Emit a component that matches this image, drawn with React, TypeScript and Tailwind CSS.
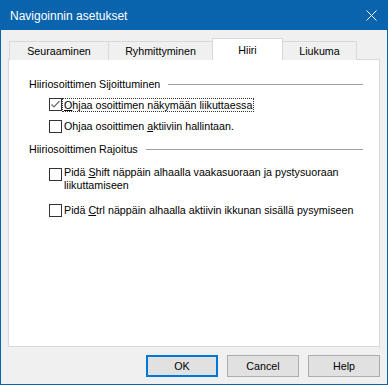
import React from 'react'

const font = { fontFamily: '"Liberation Sans", Arial, sans-serif' }

function Check({ checked }: { checked?: boolean }) {
  return (
    <div className="w-[13px] h-[13px] shrink-0 border border-[#333333] bg-white flex items-center justify-center">
      {checked && (
        <svg width="11" height="11" viewBox="0 0 11 11">
          <path d="M1.5 5.5 L4 8 L9.5 2" fill="none" stroke="#6b6b6b" strokeWidth="1.2" />
        </svg>
      )}
    </div>
  )
}

function GroupHeader({ label }: { label: string }) {
  return (
    <div className="flex items-center h-[13px]">
      <span className="whitespace-nowrap">{label}</span>
      <div className="flex-1 h-px bg-[#a0a0a0] ml-[8px]" />
    </div>
  )
}

export default function App() {
  const tabs = [
    { label: 'Seuraaminen', w: 'w-[100px]' },
    { label: 'Ryhmittyminen', w: 'w-[105px]' },
  ]
  return (
    <div className="w-[388px] h-[385px] bg-[#f0f0f0] border border-[#0a64ad] flex flex-col text-[10.7px] text-black" style={font}>
      {/* title bar */}
      <div className="h-[29px] bg-[#0a64ad] flex items-center justify-between pl-[9px] pr-[10px] text-white text-[12px]">
        <span>Navigoinnin asetukset</span>
        <svg width="11" height="11" viewBox="0 0 11 11">
          <path d="M0.5 0.5 L10.5 10.5 M10.5 0.5 L0.5 10.5" stroke="white" strokeWidth="1" />
        </svg>
      </div>

      <div className="flex flex-col px-[7px] pt-[8px]">
        {/* tabs */}
        <div className="flex items-end h-[22px] -mb-px relative z-10">
          {tabs.map((t, i) => (
            <div
              key={t.label}
              className={`${t.w} h-[19px] bg-[#f0f0f0] border border-[#d9d9d9] border-b-0 flex items-center justify-center ${i > 0 ? '-ml-px' : 'ml-px'}`}
            >
              {t.label}
            </div>
          ))}
          <div className="w-[71px] h-[22px] bg-white border border-[#d9d9d9] border-b-0 -ml-px flex items-start justify-center pt-[3px]">
            Hiiri
          </div>
          <div className="w-[74px] h-[19px] bg-[#f0f0f0] border border-[#d9d9d9] border-b-0 border-l-0 flex items-center justify-center">
            Liukuma
          </div>
        </div>

        {/* panel */}
        <div className="w-[372px] h-[288px] bg-white border border-[#d9d9d9] flex flex-col pl-[20px] pr-[16px] pt-[18px]">
          <GroupHeader label="Hiiriosoittimen Sijoittuminen" />

          <div className="flex items-start ml-[20px] mt-[7px] h-[14px]">
            <Check checked />
            <span className="px-[1px] h-[14px] leading-[12px] border border-dotted border-[#333333] whitespace-nowrap">
              <span className="underline">O</span>hjaa osoittimen näkymään liikuttaessa
            </span>
          </div>

          <div className="flex items-start ml-[20px] mt-[8px] h-[14px]">
            <Check />
            <span className="ml-[1px] px-[1px] leading-[13px] whitespace-nowrap">
              Ohjaa osoittimen <span className="underline">a</span>ktiiviin hallintaan.
            </span>
          </div>

          <div className="mt-[9px]">
            <GroupHeader label="Hiiriosoittimen Rajoitus" />
          </div>

          <div className="flex items-start ml-[20px] mt-[10px]">
            <div className="mt-[2px]">
              <Check />
            </div>
            <span className="ml-[1px] px-[1px] leading-[13px]">
              Pidä <span className="underline">S</span>hift näppäin alhaalla vaakasuoraan ja pystysuoraan
              <br />
              liikuttamiseen
            </span>
          </div>

          <div className="flex items-start ml-[20px] mt-[12px] h-[14px]">
            <Check />
            <span className="ml-[1px] px-[1px] leading-[13px] whitespace-nowrap">
              Pidä <span className="underline">C</span>trl näppäin alhaalla aktiivin ikkunan sisällä pysymiseen
            </span>
          </div>
        </div>

        {/* buttons */}
        <div className="flex justify-end gap-[9px] mt-[8px]">
          <button className="w-[72px] h-[22px] bg-[#e1e1e1] border-2 border-[#0078d7] flex items-center justify-center">
            OK
          </button>
          <button className="w-[72px] h-[22px] bg-[#e1e1e1] border border-[#adadad] flex items-center justify-center">
            Cancel
          </button>
          <button className="w-[72px] h-[22px] bg-[#e1e1e1] border border-[#adadad] flex items-center justify-center">
            Help
          </button>
        </div>
      </div>
    </div>
  )
}
